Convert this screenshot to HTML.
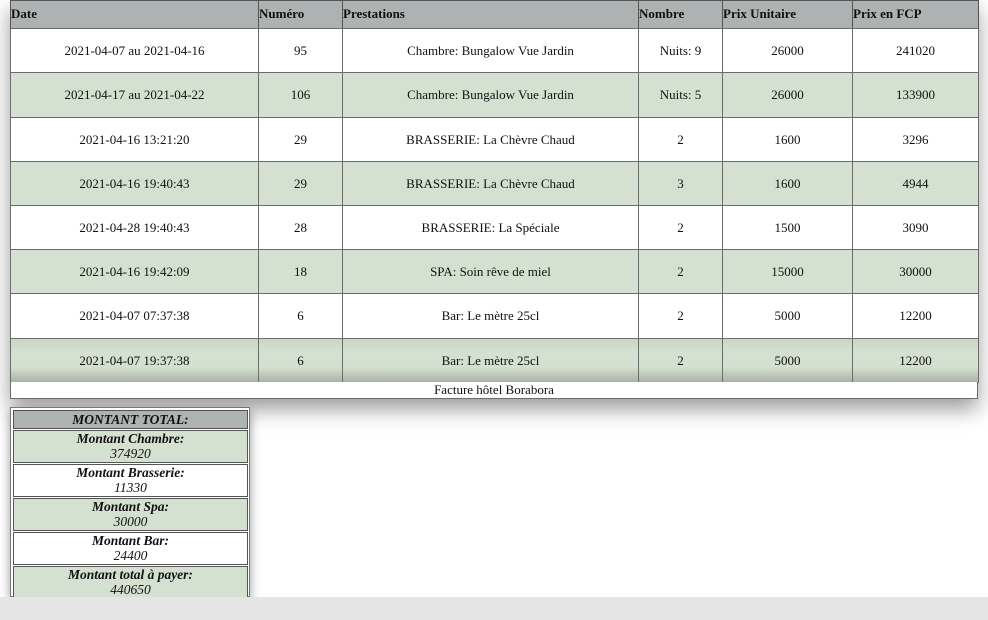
<!DOCTYPE html>
<html><head><meta charset="utf-8"><style>
body{margin:0;width:988px;height:620px;overflow:hidden;background:#fff;font-family:"Liberation Serif",serif;font-size:13px;color:#111;position:relative}
.c{position:absolute;box-sizing:border-box;border:1px solid #6a6d6a;display:flex;align-items:center;justify-content:center;text-align:center}
.h{background:#adb2b2;font-weight:bold;justify-content:flex-start;align-items:flex-start;padding-top:5px;border-color:#555}
.g{background:#d4e0d0}
.w{background:#fff}
.l{background:linear-gradient(#c9d6c5,#d4e0d0 30%,#d4e0d0 65%,#a9b3a6)}
#main{position:absolute;left:10px;top:0;width:968px;height:399px;box-shadow:0 10px 20px rgba(0,0,0,.4)}
#tot{position:absolute;left:10px;top:407px;width:240px;height:190px;box-shadow:0 4px 10px rgba(0,0,0,.4);background:#fff;border:1px solid #777;box-sizing:border-box}
.t{position:absolute;left:2px;width:235px;box-sizing:border-box;border:1px solid #555;text-align:center;font-style:italic;line-height:15px;font-size:13.5px}
.t b{display:block}
#bar{position:absolute;left:0;top:597px;width:988px;height:23px;background:#e6e5e5}
</style></head><body>
<div id="main"></div>
<div id="cells"></div>
<script>
var cols=[10,258,342,638,722,852,978];
var hd=["Date","Numéro","Prestations","Nombre","Prix Unitaire","Prix en FCP"];
var rows=[["2021-04-07 au 2021-04-16","95","Chambre: Bungalow Vue Jardin","Nuits: 9","26000","241020"],
["2021-04-17 au 2021-04-22","106","Chambre: Bungalow Vue Jardin","Nuits: 5","26000","133900"],
["2021-04-16 13:21:20","29","BRASSERIE: La Chèvre Chaud","2","1600","3296"],
["2021-04-16 19:40:43","29","BRASSERIE: La Chèvre Chaud","3","1600","4944"],
["2021-04-28 19:40:43","28","BRASSERIE: La Spéciale","2","1500","3090"],
["2021-04-16 19:42:09","18","SPA: Soin rêve de miel","2","15000","30000"],
["2021-04-07 07:37:38","6","Bar: Le mètre 25cl","2","5000","12200"],
["2021-04-07 19:37:38","6","Bar: Le mètre 25cl","2","5000","12200"]];
var ys=[28,72,117,161,205,249,293,338,382];
var h="";
for(var i=0;i<6;i++)h+='<div class="c h" style="left:'+cols[i]+'px;top:0;width:'+(cols[i+1]-cols[i]+1)+'px;height:29px">'+hd[i]+'</div>';
for(var r=0;r<8;r++)for(var i=0;i<6;i++)h+='<div class="c '+(r==7?'l':(r%2?'g':'w'))+'" style="left:'+cols[i]+'px;top:'+ys[r]+'px;width:'+(cols[i+1]-cols[i]+1)+'px;height:'+(ys[r+1]-ys[r]+1)+'px">'+rows[r][i]+'</div>';
h+='<div class="c w" style="left:10px;top:382px;width:968px;height:17px;border-top:none">Facture hôtel Borabora</div>';
document.getElementById("cells").innerHTML=h;
</script>
<div id="tot">
<div class="t" style="top:2px;height:19px;background:#adb2b2;font-weight:bold;line-height:17px">MONTANT TOTAL:</div>
<div class="t g" style="top:22px;height:33px"><b>Montant Chambre:</b>374920</div>
<div class="t w" style="top:56px;height:33px"><b>Montant Brasserie:</b>11330</div>
<div class="t g" style="top:90px;height:33px"><b>Montant Spa:</b>30000</div>
<div class="t w" style="top:124px;height:33px"><b>Montant Bar:</b>24400</div>
<div class="t g" style="top:158px;height:33px"><b>Montant total à payer:</b>440650</div>
</div>
<div id="bar"></div>
</body></html>
